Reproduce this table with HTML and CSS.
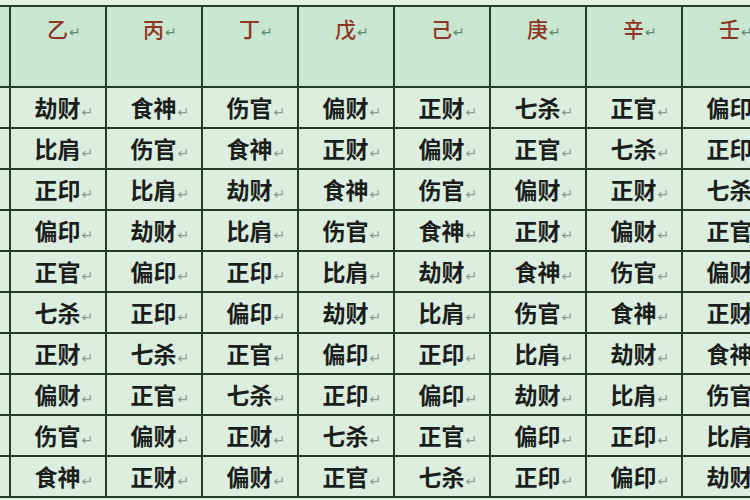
FILE: index.html
```html
<!DOCTYPE html>
<html lang="zh">
<head>
<meta charset="utf-8">
<title>十神表</title>
<link rel="stylesheet" href="styles.css">
</head>
<body>
<div class="sheet">
  <div class="grid">
    <div class="hd">甲<i class="rt">↵</i></div>
    <div class="hd">乙<i class="rt">↵</i></div>
    <div class="hd">丙<i class="rt">↵</i></div>
    <div class="hd">丁<i class="rt">↵</i></div>
    <div class="hd">戊<i class="rt">↵</i></div>
    <div class="hd">己<i class="rt">↵</i></div>
    <div class="hd">庚<i class="rt">↵</i></div>
    <div class="hd">辛<i class="rt">↵</i></div>
    <div class="hd">壬<i class="rt">↵</i></div>

    <div class="c">比肩<i class="rt">↵</i></div><div class="c">劫财<i class="rt">↵</i></div><div class="c">食神<i class="rt">↵</i></div><div class="c">伤官<i class="rt">↵</i></div><div class="c">偏财<i class="rt">↵</i></div><div class="c">正财<i class="rt">↵</i></div><div class="c">七杀<i class="rt">↵</i></div><div class="c">正官<i class="rt">↵</i></div><div class="c">偏印<i class="rt">↵</i></div>
    <div class="c">劫财<i class="rt">↵</i></div><div class="c">比肩<i class="rt">↵</i></div><div class="c">伤官<i class="rt">↵</i></div><div class="c">食神<i class="rt">↵</i></div><div class="c">正财<i class="rt">↵</i></div><div class="c">偏财<i class="rt">↵</i></div><div class="c">正官<i class="rt">↵</i></div><div class="c">七杀<i class="rt">↵</i></div><div class="c">正印<i class="rt">↵</i></div>
    <div class="c">偏印<i class="rt">↵</i></div><div class="c">正印<i class="rt">↵</i></div><div class="c">比肩<i class="rt">↵</i></div><div class="c">劫财<i class="rt">↵</i></div><div class="c">食神<i class="rt">↵</i></div><div class="c">伤官<i class="rt">↵</i></div><div class="c">偏财<i class="rt">↵</i></div><div class="c">正财<i class="rt">↵</i></div><div class="c">七杀<i class="rt">↵</i></div>
    <div class="c">正印<i class="rt">↵</i></div><div class="c">偏印<i class="rt">↵</i></div><div class="c">劫财<i class="rt">↵</i></div><div class="c">比肩<i class="rt">↵</i></div><div class="c">伤官<i class="rt">↵</i></div><div class="c">食神<i class="rt">↵</i></div><div class="c">正财<i class="rt">↵</i></div><div class="c">偏财<i class="rt">↵</i></div><div class="c">正官<i class="rt">↵</i></div>
    <div class="c">七杀<i class="rt">↵</i></div><div class="c">正官<i class="rt">↵</i></div><div class="c">偏印<i class="rt">↵</i></div><div class="c">正印<i class="rt">↵</i></div><div class="c">比肩<i class="rt">↵</i></div><div class="c">劫财<i class="rt">↵</i></div><div class="c">食神<i class="rt">↵</i></div><div class="c">伤官<i class="rt">↵</i></div><div class="c">偏财<i class="rt">↵</i></div>
    <div class="c">正官<i class="rt">↵</i></div><div class="c">七杀<i class="rt">↵</i></div><div class="c">正印<i class="rt">↵</i></div><div class="c">偏印<i class="rt">↵</i></div><div class="c">劫财<i class="rt">↵</i></div><div class="c">比肩<i class="rt">↵</i></div><div class="c">伤官<i class="rt">↵</i></div><div class="c">食神<i class="rt">↵</i></div><div class="c">正财<i class="rt">↵</i></div>
    <div class="c">偏财<i class="rt">↵</i></div><div class="c">正财<i class="rt">↵</i></div><div class="c">七杀<i class="rt">↵</i></div><div class="c">正官<i class="rt">↵</i></div><div class="c">偏印<i class="rt">↵</i></div><div class="c">正印<i class="rt">↵</i></div><div class="c">比肩<i class="rt">↵</i></div><div class="c">劫财<i class="rt">↵</i></div><div class="c">食神<i class="rt">↵</i></div>
    <div class="c">正财<i class="rt">↵</i></div><div class="c">偏财<i class="rt">↵</i></div><div class="c">正官<i class="rt">↵</i></div><div class="c">七杀<i class="rt">↵</i></div><div class="c">正印<i class="rt">↵</i></div><div class="c">偏印<i class="rt">↵</i></div><div class="c">劫财<i class="rt">↵</i></div><div class="c">比肩<i class="rt">↵</i></div><div class="c">伤官<i class="rt">↵</i></div>
    <div class="c">食神<i class="rt">↵</i></div><div class="c">伤官<i class="rt">↵</i></div><div class="c">偏财<i class="rt">↵</i></div><div class="c">正财<i class="rt">↵</i></div><div class="c">七杀<i class="rt">↵</i></div><div class="c">正官<i class="rt">↵</i></div><div class="c">偏印<i class="rt">↵</i></div><div class="c">正印<i class="rt">↵</i></div><div class="c">比肩<i class="rt">↵</i></div>
    <div class="c">伤官<i class="rt">↵</i></div><div class="c">食神<i class="rt">↵</i></div><div class="c">正财<i class="rt">↵</i></div><div class="c">偏财<i class="rt">↵</i></div><div class="c">正官<i class="rt">↵</i></div><div class="c">七杀<i class="rt">↵</i></div><div class="c">正印<i class="rt">↵</i></div><div class="c">偏印<i class="rt">↵</i></div><div class="c">劫财<i class="rt">↵</i></div>
  </div>
</div>
</body>
</html>
```
FILE: styles.css
```css
html, body {
  margin: 0;
  padding: 0;
  background: #e4f0e4;
  overflow: hidden;
}
.sheet {
  width: 750px;
  height: 500px;
  overflow: hidden;
  padding-top: 5px;
  box-sizing: border-box;
}
.grid {
  display: grid;
  grid-template-columns: repeat(9, 94px);
  grid-template-rows: 79px repeat(10, 39px);
  gap: 2px;
  padding: 2px;
  background: #243d2b;
  width: max-content;
  margin-left: -87px;
  font-family: "Noto Sans CJK SC", "Noto Sans", sans-serif;
}
.hd {
  background: #c9e6d0;
  color: #8e3526;
  font-size: 21px;
  font-weight: 500;
  line-height: 1;
  text-align: center;
  padding-top: 11px;
  box-sizing: border-box;
}
.c {
  background: #dceee0;
  color: #1a1f1b;
  font-size: 23px;
  font-weight: 700;
  line-height: 39px;
  text-align: center;
  white-space: nowrap;
}
.rt {
  display: inline-block;
  width: 14px;
  margin-right: -14px;
  padding-left: 1px;
  font-style: normal;
  font-weight: 400;
  font-size: 14px;
  line-height: 1;
  color: #8a9a8e;
  font-family: "DejaVu Sans", sans-serif;
  text-align: left;
}
.hd .rt {
  color: #5e8c72;
}
```
